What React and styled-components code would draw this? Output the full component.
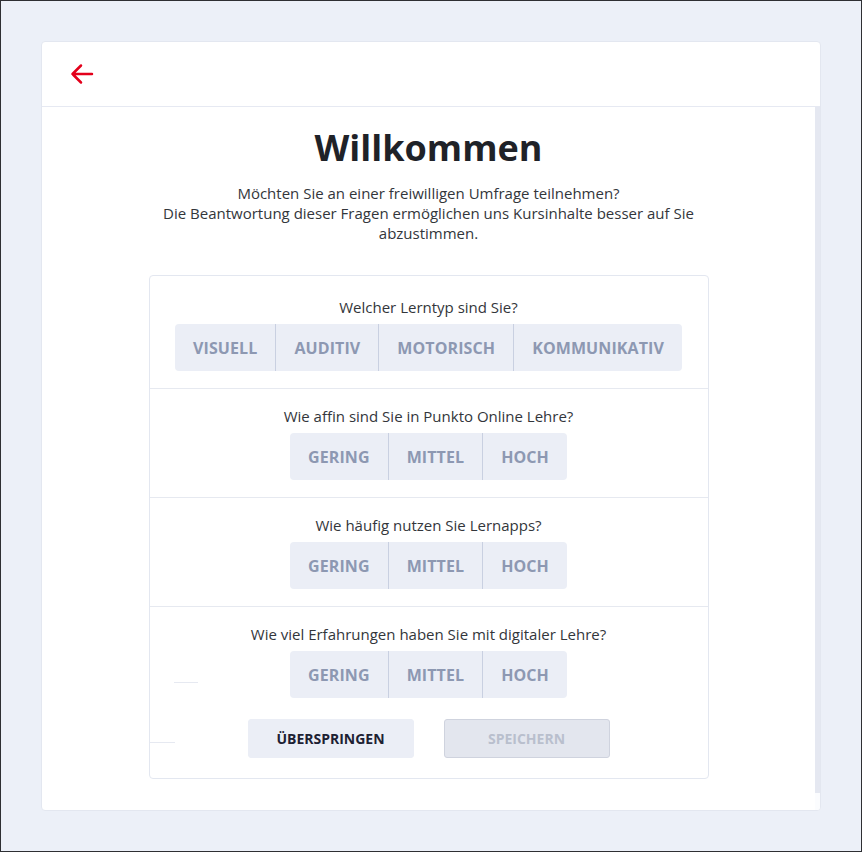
import React, { useState } from "react";
import styled, { createGlobalStyle } from "styled-components";

const GlobalStyle = createGlobalStyle`
  html, body {
    margin: 0;
    padding: 0;
  }
  body {
    font-family: "Open Sans", "Liberation Sans", sans-serif;
    color: #2b2f36;
  }
  * {
    box-sizing: border-box;
  }
`;

const Screen = styled.div`
  width: 862px;
  height: 852px;
  border: 1px solid #2e2f33;
  background-color: #ecf0f8;
  padding: 40px;
`;

const Card = styled.div`
  height: 770px;
  display: flex;
  flex-direction: column;
  background-color: #fff;
  border: 1px solid #e3e7f0;
  border-radius: 4px;
  overflow: hidden;
`;

const CardHeader = styled.div`
  height: 65px;
  flex-shrink: 0;
  display: flex;
  align-items: center;
  padding-left: 28px;
  border-bottom: 1px solid #e6e9f2;
`;

const BackButton = styled.button`
  display: flex;
  padding: 0;
  border: none;
  background: none;
  cursor: pointer;
`;

const CardBody = styled.div`
  flex: 1;
  display: flex;
  min-height: 0;
`;

const Content = styled.div`
  flex: 1;
  display: flex;
  flex-direction: column;
  align-items: center;
  padding-top: 19px;
`;

const ScrollTrack = styled.div`
  width: 5px;
  display: flex;
  flex-direction: column;
  background-color: #fbfcfe;
`;

const ScrollThumb = styled.div`
  height: 686px;
  background-color: #e5e8f1;
`;

const Title = styled.h1`
  margin: 0;
  font-size: 36px;
  line-height: 44px;
  font-weight: 700;
  color: #1f2228;
`;

const Intro = styled.p`
  margin: 13px 0 0;
  max-width: 560px;
  text-align: center;
  font-size: 15px;
  line-height: 20px;
  color: #33363b;
`;

const Survey = styled.div`
  width: 560px;
  margin-top: 32px;
  padding-top: 4px;
  border: 1px solid #e3e7f0;
  border-radius: 4px;
`;

const Section = styled.div`
  position: relative;
  display: flex;
  flex-direction: column;
  align-items: center;
  padding: 17px 0 ${(p) => (p.last ? "20px" : "17px")};
  border-top: ${(p) => (p.first ? "none" : "1px solid #e6e9f0")};
`;

const Question = styled.div`
  font-size: 15px;
  line-height: 20px;
  color: #33363b;
`;

const Group = styled.div`
  display: flex;
  margin-top: 7px;
  height: 47px;
  background-color: #ebeef6;
  border-radius: 4px;
`;

const Option = styled.button`
  padding: 0 18px;
  border: none;
  border-left: ${(p) => (p.first ? "none" : "1px solid #c9d0e1")};
  background: ${(p) => (p.active ? "#d9dfee" : "transparent")};
  font-family: inherit;
  font-size: 16px;
  font-weight: 700;
  letter-spacing: 0.1px;
  color: #8d98b2;
  cursor: pointer;
`;

const Actions = styled.div`
  display: flex;
  gap: 30px;
  margin-top: 21px;
`;

const ActionButton = styled.button`
  width: 166px;
  height: 39px;
  border-radius: 3px;
  border: 1px solid ${(p) => (p.disabled ? "#cfd3de" : "#ebeef6")};
  background-color: ${(p) => (p.disabled ? "#e3e6ee" : "#ebeef6")};
  font-family: inherit;
  font-size: 14px;
  font-weight: 700;
  color: ${(p) => (p.disabled ? "#b9bfcd" : "#1d2133")};
  cursor: ${(p) => (p.disabled ? "default" : "pointer")};
`;

const Stub = styled.span`
  position: absolute;
  left: ${(p) => p.left}px;
  top: ${(p) => p.top}px;
  width: ${(p) => p.w}px;
  height: 1px;
  background-color: #e6e9f1;
`;

const ArrowLeft = () => (
  <svg width="24" height="24" viewBox="0 0 24 24" fill="none">
    <path
      d="M22 12H2.5M11 3.5L2.5 12L11 20.5"
      stroke="#e3001b"
      strokeWidth="2.5"
      strokeLinecap="round"
      strokeLinejoin="round"
    />
  </svg>
);

const questions = [
  {
    text: "Welcher Lerntyp sind Sie?",
    options: ["VISUELL", "AUDITIV", "MOTORISCH", "KOMMUNIKATIV"],
  },
  {
    text: "Wie affin sind Sie in Punkto Online Lehre?",
    options: ["GERING", "MITTEL", "HOCH"],
  },
  { text: "Wie häufig nutzen Sie Lernapps?", options: ["GERING", "MITTEL", "HOCH"] },
  {
    text: "Wie viel Erfahrungen haben Sie mit digitaler Lehre?",
    options: ["GERING", "MITTEL", "HOCH"],
  },
];

export default function App() {
  const [answers, setAnswers] = useState({});
  const last = questions.length - 1;

  return (
    <>
      <GlobalStyle />
      <Screen>
        <Card>
          <CardHeader>
            <BackButton aria-label="Zurück">
              <ArrowLeft />
            </BackButton>
          </CardHeader>
          <CardBody>
            <Content>
              <Title>Willkommen</Title>
              <Intro>
                Möchten Sie an einer freiwilligen Umfrage teilnehmen?
                <br />
                Die Beantwortung dieser Fragen ermöglichen uns Kursinhalte besser auf Sie
                abzustimmen.
              </Intro>
              <Survey>
                {questions.map((q, i) => (
                  <Section key={q.text} first={i === 0} last={i === last}>
                    <Question>{q.text}</Question>
                    <Group>
                      {q.options.map((o, j) => (
                        <Option
                          key={o}
                          first={j === 0}
                          active={answers[i] === o}
                          onClick={() => setAnswers({ ...answers, [i]: o })}
                        >
                          {o}
                        </Option>
                      ))}
                    </Group>
                    {i === last && (
                      <>
                        <Stub left={24} top={75} w={24} />
                        <Stub left={0} top={135} w={25} />
                        <Actions>
                          <ActionButton>ÜBERSPRINGEN</ActionButton>
                          <ActionButton disabled>SPEICHERN</ActionButton>
                        </Actions>
                      </>
                    )}
                  </Section>
                ))}
              </Survey>
            </Content>
            <ScrollTrack>
              <ScrollThumb />
            </ScrollTrack>
          </CardBody>
        </Card>
      </Screen>
    </>
  );
}
